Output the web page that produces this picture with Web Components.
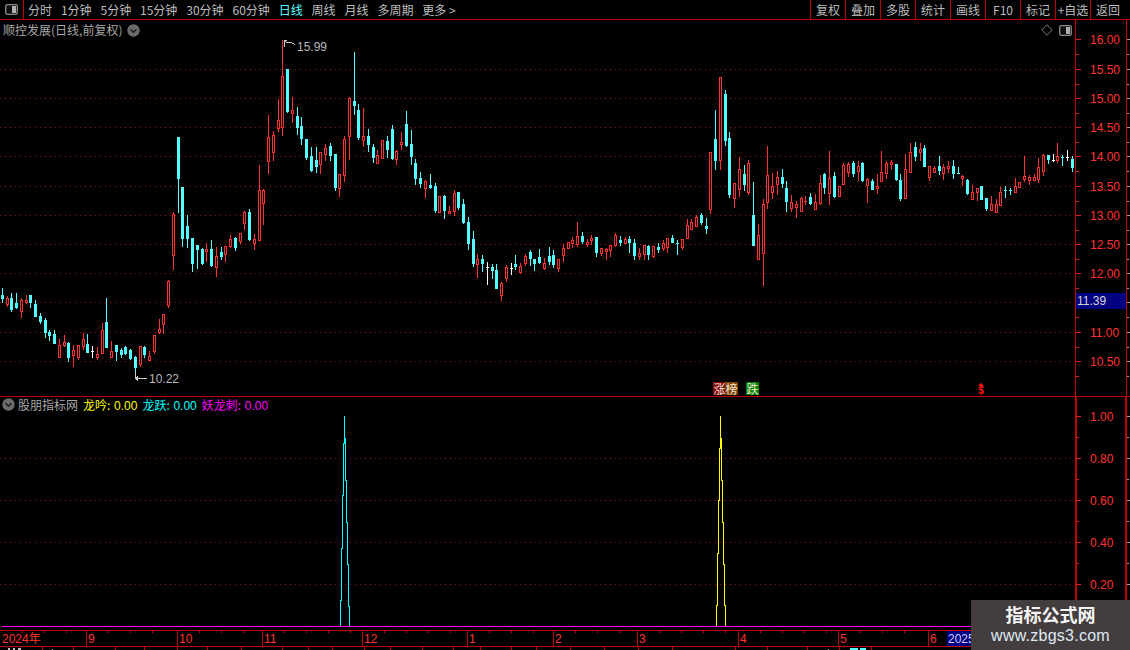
<!DOCTYPE html>
<html lang="zh">
<head>
<meta charset="utf-8">
<title>顺控发展</title>
<style>
	html, body { margin: 0; padding: 0; background: #000; }
	body {
		width: 1130px;
		height: 650px;
		overflow: hidden;
		position: relative;
		font: 12px "Noto Sans CJK SC", "Liberation Sans", sans-serif;
		color: #c0c0c0;
	}
</style>
</head>
<body>
	<stock-toolbar>
		<tool-btn slot="periods">分时</tool-btn>
		<tool-btn slot="periods">1分钟</tool-btn>
		<tool-btn slot="periods">5分钟</tool-btn>
		<tool-btn slot="periods">15分钟</tool-btn>
		<tool-btn slot="periods">30分钟</tool-btn>
		<tool-btn slot="periods">60分钟</tool-btn>
		<tool-btn slot="periods" active>日线</tool-btn>
		<tool-btn slot="periods">周线</tool-btn>
		<tool-btn slot="periods">月线</tool-btn>
		<tool-btn slot="periods">多周期</tool-btn>
		<tool-btn slot="periods">更多 &gt;</tool-btn>
		<tool-btn slot="actions" boxed>复权</tool-btn>
		<tool-btn slot="actions" boxed>叠加</tool-btn>
		<tool-btn slot="actions" boxed>多股</tool-btn>
		<tool-btn slot="actions" boxed>统计</tool-btn>
		<tool-btn slot="actions" boxed>画线</tool-btn>
		<tool-btn slot="actions" boxed>F10</tool-btn>
		<tool-btn slot="actions" boxed>标记</tool-btn>
		<tool-btn slot="actions" boxed>+自选</tool-btn>
		<tool-btn slot="actions" boxed>返回</tool-btn>
	</stock-toolbar>
	<kline-chart></kline-chart>
	<indicator-chart></indicator-chart>
	<date-axis></date-axis>
	<tab-strip></tab-strip>
	<brand-mark></brand-mark>

<script>
/* global customElements */
const RED = "#ff3232";
const CYAN = "#54ffff";
const LINE = "#c00000";
const DOT = "#901010";
const NUM_FONT = `"Liberation Sans", sans-serif`;

// r / c / w, body top, body bottom, high, low (screen y, read off the reference)
const CANDLES = [
	["c",295,298,288,302],["r",298,304,296,306],["c",298,309,293,311],["c",303,307,293,308],["r",300,311,298,317],
	["r",300,302,295,303],["c",295,302,295,307],["c",304,316,300,316],["c",316,321,313,323],["c",320,332,318,337],
	["c",332,335,330,340],["c",334,343,330,343],["r",345,357,339,357],["r",342,345,335,346],["c",343,357,342,361],
	["r",350,355,345,366],["r",345,357,345,359],["r",339,346,333,349],["c",344,352,334,352],["w",351,351,346,357],
	["r",354,357,347,359],["r",330,353,323,353],["c",322,347,298,347],["r",351,357,341,357],["c",345,351,345,360],
	["c",350,354,348,357],["c",347,353,346,354],["c",350,358,349,359],["c",357,367,356,378],["r",346,364,346,366],
	["c",347,354,346,357],["r",356,360,351,360],["r",335,351,335,353],["r",329,332,319,333],["r",314,324,314,333],
	["r",281,305,280,307],["r",214,255,212,269],["c",137,178,137,212],["c",187,238,187,246],["c",226,238,215,247],
	["c",238,263,238,271],["c",245,249,245,268],["c",249,263,248,264],["r",249,251,243,261],["c",249,265,240,266],
	["r",256,267,247,276],["c",252,256,247,259],["r",246,254,246,261],["r",239,246,235,247],["c",238,247,237,250],
	["r",233,241,233,243],["r",212,223,211,229],["c",212,239,209,240],["r",239,243,234,249],["r",190,240,165,240],
	["r",190,203,189,224],["r",137,161,115,173],["r",135,152,131,160],["r",120,128,99,131],["r",76,127,40,135],
	["c",69,111,69,112],["r",110,113,97,122],["c",116,127,107,134],["c",126,138,117,144],["c",139,157,139,159],
	["c",156,170,147,171],["c",160,166,147,172],["r",152,164,152,173],["r",148,154,144,160],["c",146,155,143,160],
	["c",154,187,154,190],["r",174,188,174,196],["r",139,175,136,181],["r",98,136,97,159],["c",101,105,52,114],
	["c",110,137,104,139],["r",136,140,108,146],["c",136,144,129,151],["c",147,157,144,162],["r",155,163,150,163],
	["r",140,158,140,158],["c",141,149,136,157],["c",129,158,125,159],["r",151,159,150,164],["r",142,144,132,149],
	["c",124,145,111,146],["c",144,156,130,164],["c",163,178,159,184],["c",178,183,172,187],["r",181,188,180,197],
	["c",185,187,174,188],["c",186,210,183,212],["r",196,212,196,212],["c",196,210,195,218],["r",211,213,206,213],
	["r",193,211,190,215],["c",192,207,192,209],["c",204,222,199,223],["c",222,243,217,249],["c",239,263,231,266],
	["r",259,264,254,277],["c",259,263,255,271],["w",267,267,262,284],["c",267,270,264,278],["c",270,288,264,288],
	["r",283,295,282,300],["r",267,278,265,281],["w",268,268,263,274],["c",264,266,255,269],["r",266,272,263,273],
	["r",256,263,254,265],["c",252,258,250,265],["c",259,263,259,270],["c",257,262,249,263],["r",263,268,258,269],
	["c",256,261,247,264],["c",255,264,250,267],["r",259,268,259,271],["r",248,255,244,261],["r",242,248,242,248],
	["r",240,243,237,247],["r",236,244,222,246],["c",236,241,232,243],["r",242,244,239,246],["r",238,240,235,244],
	["c",237,252,237,256],["r",248,253,248,255],["r",249,251,248,259],["r",245,250,245,256],["r",235,245,233,246],
	["c",240,242,236,245],["r",239,243,237,243],["c",239,242,236,252],["c",243,255,239,259],["r",253,256,248,259],
	["r",245,254,245,259],["c",246,254,245,259],["r",246,256,246,257],["c",247,249,243,252],["r",243,248,240,250],
	["r",238,247,238,252],["c",238,242,235,242],["c",243,243,240,254],["r",239,247,239,249],["r",225,238,219,238],
	["r",222,229,219,229],["r",217,226,215,226],["c",215,222,213,224],["c",226,228,218,233],["r",152,209,152,213],
	["c",139,160,110,169],["r",77,160,77,169],["c",94,140,90,145],["c",138,194,132,197],["r",183,198,183,207],
	["r",169,189,157,196],["c",174,184,165,190],["r",163,192,160,194],["c",215,245,182,245],["r",235,259,224,259],
	["r",204,253,199,285],["r",175,202,146,208],["r",186,192,173,198],["r",177,184,171,194],["c",177,183,169,187],
	["c",188,201,181,211],["r",202,208,195,211],["r",204,207,201,217],["r",198,211,197,211],["r",201,201,196,204],
	["c",197,203,193,204],["r",202,209,194,209],["r",183,203,175,204],["c",174,187,173,193],["r",178,193,151,204],
	["c",176,196,172,197],["r",186,196,186,196],["r",165,184,163,184],["r",164,172,162,176],["c",163,173,161,176],
	["r",166,171,161,180],["c",163,180,162,181],["r",179,185,178,202],["c",181,189,179,189],["r",186,188,174,193],
	["r",172,181,151,181],["r",163,173,161,178],["r",162,164,160,169],["c",164,179,164,180],["c",180,198,174,200],
	["r",169,198,154,198],["r",152,172,143,172],["c",147,156,142,160],["r",149,152,143,160],["c",148,166,145,166],
	["r",166,177,166,180],["r",168,172,166,172],["c",166,170,156,174],["r",167,173,164,179],["r",166,168,161,172],
	["c",166,173,160,178],["c",173,173,167,173],["r",176,178,175,185],["c",180,193,179,194],["r",192,199,185,199],
	["r",188,192,188,200],["c",186,199,186,199],["c",198,208,198,210],["r",204,210,196,210],["r",204,212,199,212],
	["r",192,205,187,205],["c",190,190,186,197],["c",190,190,188,194],["r",186,192,178,192],["r",182,187,182,187],
	["r",176,179,156,181],["r",177,180,175,184],["r",177,180,174,180],["r",167,179,158,182],["r",155,171,154,175],
	["c",155,159,155,163],["w",160,160,154,161],["r",156,160,143,162],["c",157,157,155,165],["w",157,157,150,160],
	["c",159,167,156,171]
];

// 11.50 sits behind the last-price box, so it has no label of its own
const PRICE_TICKS = [
	["16.00",39],["15.50",69],["15.00",98],["14.50",127],["14.00",156],["13.50",186],
	["13.00",215],["12.50",244],["12.00",273],[null,302],["11.00",332],["10.50",361]
];
const INDICATOR_TICKS = [["1.00",416],["0.80",458],["0.60",500],["0.40",542],["0.20",584]];

function rect(x, y, w, h, fill) {
	return `<rect x="${x}" y="${y}" width="${w}" height="${h}" fill="${fill}"/>`;
}

function dotted(y) {
	return `<line x1="0" x2="1075" y1="${y + 0.5}" y2="${y + 0.5}" stroke="${DOT}" stroke-dasharray="1 4"/>`;
}

// Right hand axis shared by both panels: labels, long ticks and a short tick half way
function axisTicks(ticks, top, bottom) {
	let out = "";
	const step = ticks[1][1] - ticks[0][1];
	ticks.forEach(([label, y]) => {
		out += rect(1076, y, 5, 1, "#e02020");
		out += rect(1127, y, 3, 1, "#a0a0a0");
		if (label) {
			out += `<text x="1090" y="${y + 5}" class="num" fill="${RED}">${label}</text>`;
		}
		const half = Math.round(y + step / 2);
		if (half > top && half < bottom) {
			out += rect(1076, half, 3, 1, "#e02020");
			out += rect(1127, half, 2, 1, "#a0a0a0");
		}
	});
	return out;
}

const ROUND_ICON = `
	<svg width="13" height="13" viewBox="0 0 13 13">
		<circle cx="6.5" cy="6.5" r="6.2" fill="#6c6c6c"/>
		<path d="M3.6 5.2 L6.5 8.2 L9.4 5.2" fill="none" stroke="#1c1c1c" stroke-width="1.4"/>
	</svg>`;

const PANEL_ICON = `
	<svg width="13" height="11" viewBox="0 0 13 11">
		<rect x="0.7" y="0.7" width="11.6" height="9.6" rx="1.6" fill="#111" stroke="#8a8a8a" stroke-width="1.3"/>
		<rect x="7" y="2" width="4" height="7" fill="#b0b0b0"/>
	</svg>`;

class ToolBtn extends HTMLElement {
	constructor() {
		super();
		this.attachShadow({ mode: "open" });
		this.shadowRoot.innerHTML = `
			<style>
				:host {
					display: block;
					height: 19px;
					line-height: 19px;
					white-space: nowrap;
					color: #bdbdbd;
				}
				:host([active]) { color: #54ffff; }
				:host([boxed]) {
					box-sizing: border-box;
					width: 35px;
					text-align: center;
					border-left: 1px solid ${LINE};
				}
			</style>
			<slot></slot>`;
	}
}

class StockToolbar extends HTMLElement {
	constructor() {
		super();
		this.attachShadow({ mode: "open" });
		this.shadowRoot.innerHTML = `
			<style>
				:host {
					display: flex;
					height: 19px;
					border-bottom: 1px solid ${LINE};
				}
				.toggle {
					box-sizing: border-box;
					width: 24px;
					display: flex;
					align-items: center;
					justify-content: center;
					border-right: 1px solid ${LINE};
				}
				.periods {
					display: flex;
					gap: 8.9px;
					padding-left: 4px;
					flex: 1;
				}
				.actions { display: flex; padding-right: 5px; }
			</style>
			<div class="toggle">${PANEL_ICON}</div>
			<div class="periods"><slot name="periods"></slot></div>
			<div class="actions"><slot name="actions"></slot></div>`;
	}
}

class KlineChart extends HTMLElement {
	constructor() {
		super();
		this.attachShadow({ mode: "open" });
	}

	connectedCallback() {
		this.render();
	}

	candles() {
		return CANDLES.map(([kind, top, bot, hi, lo], i) => {
			const x = Math.floor(2.3 + 4.755 * i);
			const color = kind === "r" ? RED : kind === "c" ? CYAN : "#ffffff";
			let out = rect(x, hi, 1, lo - hi + 1, color);
			if (top === bot) {
				return out + rect(x - 1, top, 3, 1, color);
			}
			out += rect(x - 1, top, 3, bot - top + 1, color);
			if (kind === "r" && bot - top > 1) {
				out += rect(x, top + 1, 1, bot - top - 1, "#000");
			}
			return out;
		}).join("");
	}

	render() {
		const grid = PRICE_TICKS.slice(1).map(([, y]) => dotted(y)).join("");
		this.shadowRoot.innerHTML = `
			<style>
				:host {
					display: block;
					position: relative;
					height: 376px;
					border-bottom: 1px solid ${LINE};
				}
				svg.plot { display: block; shape-rendering: crispEdges; }
				.num { font: 12px ${NUM_FONT}; }
				.title {
					position: absolute;
					left: 3px;
					top: 1px;
					display: flex;
					align-items: center;
					gap: 5px;
					line-height: 18px;
					color: #a8a8a8;
					white-space: nowrap;
				}
				.title svg { display: block; }
				.corner {
					position: absolute;
					right: 58px;
					top: 4px;
					display: flex;
					align-items: center;
					gap: 6px;
				}
				.corner svg { display: block; }
				.last {
					position: absolute;
					left: 1076px;
					top: 273px;
					width: 50px;
					height: 16px;
					background: #000080;
					color: #d8d8d8;
					font: 12px/16px ${NUM_FONT};
					padding-left: 1px;
					box-sizing: border-box;
				}
				.flag {
					position: absolute;
					top: 362px;
					width: 13px;
					height: 13px;
					color: #f0e8d8;
					font-size: 12px;
					line-height: 13px;
					text-align: center;
				}
				.dollar {
					position: absolute;
					left: 977px;
					top: 366px;
					width: 8px;
					color: #ff1010;
					font: bold 10px/10px ${NUM_FONT};
					text-align: center;
				}
				.dollar::before {
					content: "";
					position: absolute;
					left: 1px;
					top: -3px;
					border: 3px solid transparent;
					border-top: 0;
					border-bottom: 3px solid #ff1010;
				}
			</style>
			<svg class="plot" width="1130" height="376" viewBox="0 20 1130 376">
				${grid}
				${this.candles()}
				${rect(1075, 20, 1, 376, LINE)}
				${rect(1126, 20, 1, 376, LINE)}
				${axisTicks(PRICE_TICKS, 20, 396)}
				<path d="M284.5 47 V40.5 H287 M284.5 41.5 L288 43 L291 42.5 L295 44.5" fill="none" stroke="#c8c8c8"/>
				<text x="297" y="51" class="num" fill="#b8b8b8">15.99</text>
				<path d="M135.5 372 V379 M135.5 378.5 H147 M135.5 378.5 L138 376.5 M135.5 378.5 L138 380.5" fill="none" stroke="#c8c8c8"/>
				<text x="149" y="383" class="num" fill="#b8b8b8">10.22</text>
			</svg>
			<div class="title">顺控发展(日线,前复权) ${ROUND_ICON}</div>
			<div class="corner">
				<svg width="12" height="12" viewBox="0 0 12 12"><path d="M6 .8 L11.2 6 L6 11.2 L.8 6 Z" fill="none" stroke="#7c7c7c"/></svg>
				${PANEL_ICON}
			</div>
			<div class="last">11.39</div>
			<div class="flag" style="left:713px;background:#800000">涨</div>
			<div class="flag" style="left:725px;background:#804000">榜</div>
			<div class="flag" style="left:746px;background:#008000">跌</div>
			<div class="dollar">$</div>`;
	}
}

class IndicatorChart extends HTMLElement {
	constructor() {
		super();
		this.attachShadow({ mode: "open" });
	}

	connectedCallback() {
		this.render();
	}

	render() {
		const grid = INDICATOR_TICKS.slice(1).map(([, y]) => dotted(y)).join("");
		this.shadowRoot.innerHTML = `
			<style>
				:host {
					display: block;
					position: relative;
					height: 233px;
				}
				svg.plot { display: block; shape-rendering: crispEdges; }
				.num { font: 12px ${NUM_FONT}; }
				.legend {
					position: absolute;
					left: 2px;
					top: -1px;
					display: flex;
					align-items: center;
					line-height: 17px;
					white-space: nowrap;
				}
				.legend svg { display: block; margin-right: 3px; }
				.legend span { margin-right: 5px; }
				.legend b { font: 12px ${NUM_FONT}; margin-left: 1px; }
			</style>
			<svg class="plot" width="1130" height="233" viewBox="0 397 1130 233">
				${grid}
				${rect(1075, 397, 2, 233, LINE)}
				${rect(1125, 397, 2, 233, LINE)}
				${axisTicks(INDICATOR_TICKS, 397, 626)}
				<path d="M340.5 626 V600 H341.5 V548 H342.5 V495 H343.5 V443 H344.5 V416 V438 H345.5 V480 H346.5 V522 H347.5 V564 H348.5 V606 H349.5 V626" fill="none" stroke="#00ffff"/>
				<path d="M716.5 626 V605 H717.5 V553 H718.5 V500 H719.5 V448 H720.5 V416 V438 H721.5 V480 H722.5 V522 H723.5 V564 H724.5 V605 H725.5 V626" fill="none" stroke="#ffff00"/>
				${rect(2, 626, 1128, 1, "#ff00ff")}
			</svg>
			<div class="legend">
				${ROUND_ICON}
				<span style="color:#a8a8a8">股朋指标网</span>
				<span style="color:#ffff00">龙吟: <b>0.00</b></span>
				<span style="color:#00ffff">龙跃: <b>0.00</b></span>
				<span style="color:#ff00ff">妖龙刺: <b>0.00</b></span>
			</div>`;
	}
}

class DateAxis extends HTMLElement {
	constructor() {
		super();
		this.attachShadow({ mode: "open" });
		this.months = [
			["2024年",0],["9",86],["10",177],["11",262],["12",362],["1",467],
			["2",553],["3",637],["4",738],["5",838],["6",928]
		];
	}

	connectedCallback() {
		this.render();
	}

	render() {
		let marks = "";
		this.months.forEach(([label, x], i) => {
			const next = i + 1 < this.months.length ? this.months[i + 1][1] : 947;
			if (i > 0) marks += rect(x, 631, 1, 16, LINE);
			for (let t = x + 22; t < next - 10; t += 22) {
				marks += rect(t, 631, 1, 2, LINE);
			}
			marks += `<text x="${x + 2}" y="643" class="num" fill="${RED}">${label}</text>`;
		});
		this.shadowRoot.innerHTML = `
			<style>
				:host { display: block; height: 17px; }
				svg { display: block; shape-rendering: crispEdges; }
				.num { font: 12px ${NUM_FONT}, "Noto Sans CJK SC"; }
			</style>
			<svg width="1130" height="17" viewBox="0 630 1130 17">
				${rect(0, 630, 1130, 1, LINE)}
				${rect(0, 646, 1130, 1, LINE)}
				${marks}
				${rect(947, 631, 60, 15, "#000080")}
				<text x="948" y="643" class="num" fill="#d0d0ff">2025年</text>
			</svg>`;
	}
}

class TabStrip extends HTMLElement {
	constructor() {
		super();
		this.attachShadow({ mode: "open" });
	}

	connectedCallback() {
		const stops = [42, 73, 115, 144, 177, 207, 241, 282, 308, 332, 364, 390, 422, 453, 480, 511, 536, 570, 604, 638, 672, 735, 767, 807, 839, 871];
		const dividers = stops.map((x) => rect(x, 0, 1, 3, LINE)).join("");
		this.shadowRoot.innerHTML = `
			<style>
				:host { display: block; height: 3px; overflow: hidden; }
				svg { display: block; shape-rendering: crispEdges; }
			</style>
			<svg width="1130" height="3" viewBox="0 0 1130 3">
				${dividers}
				${rect(8, 1, 2, 2, "#c0c0c0")}${rect(13, 1, 2, 2, "#c0c0c0")}${rect(18, 1, 3, 2, "#c0c0c0")}
				${rect(52, 2, 1, 1, "#c0c0c0")}${rect(828, 2, 1, 1, "#c0c0c0")}
				${rect(850, 1, 8, 2, CYAN)}${rect(860, 1, 6, 2, CYAN)}
			</svg>`;
	}
}

class BrandMark extends HTMLElement {
	constructor() {
		super();
		this.attachShadow({ mode: "open" });
		this.shadowRoot.innerHTML = `
			<style>
				:host {
					position: absolute;
					right: 0;
					bottom: 0;
					width: 159px;
					height: 50px;
					box-sizing: border-box;
					padding-bottom: 3px;
					background: #433d3d;
					display: flex;
					flex-direction: column;
					align-items: center;
					justify-content: center;
				}
				.name {
					color: #f4f4f4;
					font-size: 18px;
					font-weight: 700;
					line-height: 24px;
				}
				.url {
					color: #dfe9f5;
					font: 16px/19px ${NUM_FONT};
					letter-spacing: .25px;
				}
			</style>
			<div class="name">指标公式网</div>
			<div class="url">www.zbgs3.com</div>`;
	}
}

customElements.define("tool-btn", ToolBtn);
customElements.define("stock-toolbar", StockToolbar);
customElements.define("kline-chart", KlineChart);
customElements.define("indicator-chart", IndicatorChart);
customElements.define("date-axis", DateAxis);
customElements.define("tab-strip", TabStrip);
customElements.define("brand-mark", BrandMark);
</script>
</body>
</html>
